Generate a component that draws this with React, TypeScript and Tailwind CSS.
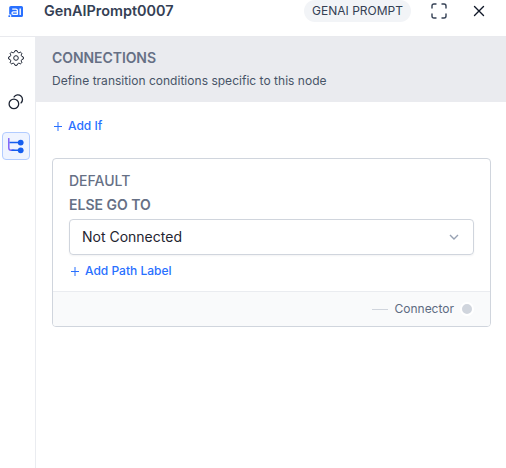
import type { ReactNode } from "react";

function gearPath(cx: number, cy: number) {
  const at = (r: number, deg: number) => {
    const a = (deg * Math.PI) / 180;
    return `${(cx + r * Math.cos(a)).toFixed(2)} ${(cy + r * Math.sin(a)).toFixed(2)}`;
  };
  let d = "";
  for (let i = 0; i < 8; i++) {
    const a = i * 45;
    d += `${i ? "L" : "M"}${at(6.1, a - 14)}L${at(7.3, a - 9)}Q${at(7.7, a)} ${at(7.3, a + 9)}L${at(6.1, a + 14)}Q${at(5.6, a + 22.5)} ${at(6.1, a + 31)}`;
  }
  return d + "Z";
}

const GearIcon = () => (
  <svg width="16" height="16" viewBox="0 0 16 16" fill="none" stroke="#1d2433" strokeWidth="1" strokeLinejoin="round">
    <path d={gearPath(8, 8)} />
    <circle cx="8" cy="8" r="2.3" />
  </svg>
);

const CirclesIcon = () => (
  <svg width="16" height="16" viewBox="0 0 16 16" fill="none" stroke="#1d2433" strokeWidth="1.3">
    <circle cx="5.9" cy="9.9" r="4.8" />
    <path d="M6.1 2.9A4.6 4.6 0 1 1 13 8.9" strokeLinecap="round" />
  </svg>
);

const TreeIcon = () => (
  <svg width="16" height="16" viewBox="0 0 16 16" fill="none">
    <path d="M0.8 0.6V10Q0.8 12.3 3.1 12.3H6" stroke="#7a5af8" strokeWidth="1.4" strokeLinecap="round" />
    <path d="M1.5 4.6H12M3.5 12.3H12" stroke="#155eef" strokeWidth="1.5" />
    <circle cx="12.7" cy="4.6" r="2.9" fill="#155eef" />
    <circle cx="12.7" cy="12.3" r="2.9" fill="#155eef" />
  </svg>
);

const Logo = () => (
  <svg width="16" height="12" viewBox="0 0 16 12" fill="none">
    <path d="M3 0H13.4Q15 0 15 1.6V9.4Q15 11 13.4 11H3.2V8.4H1.2V1.6Q1.2 0 3 0Z" fill="#2970ff" />
    <rect x="0.4" y="9.2" width="1.8" height="1.8" rx="0.5" fill="#2970ff" />
    <path d="M4.2 3.2H7.8Q9.4 3.2 9.4 4.8V8.7M9.4 5.8H5.4Q4 5.8 4 7.1Q4 8.4 5.4 8.4H9.4" stroke="#fff" strokeWidth="1.3" />
    <path d="M12.2 2.6V9" stroke="#fff" strokeWidth="1.4" />
  </svg>
);

const AddLink = ({ children }: { children: ReactNode }) => (
  <button className="flex h-4 items-center gap-[5px] text-[12px] leading-4 font-medium whitespace-nowrap text-[#2970ff]">
    <svg width="11" height="11" viewBox="0 0 11 11" stroke="currentColor" strokeWidth="1">
      <path d="M6 1V10M2 5.5H10" />
    </svg>
    {children}
  </button>
);

export default function App() {
  return (
    <div className="flex h-[468px] w-[506px] flex-col overflow-hidden bg-white font-['Inter',sans-serif] text-[#667085]">
      <header className="flex h-9 shrink-0 items-start pl-2">
        <div className="mt-1.5"><Logo /></div>
        <h1 className="ml-5 w-[260px] text-[14.4px] leading-[22px] font-semibold text-[#344054]">GenAIPrompt0007</h1>
        <span className="flex h-[22px] w-[107px] items-center justify-center rounded-full bg-[#f2f4f7] text-[12px] whitespace-nowrap text-[#344054]">
          GENAI PROMPT
        </span>
        <svg className="mt-[3px] ml-5" width="16" height="16" viewBox="0 0 16 16" fill="none" stroke="#344054" strokeWidth="1.4" strokeLinecap="round">
          <path d="M1 5V3Q1 1 3 1H5M11 1H13Q15 1 15 3V5M15 11V13Q15 15 13 15H11M5 15H3Q1 15 1 13V11" />
        </svg>
        <svg className="mt-[5px] ml-[26px]" width="12" height="12" viewBox="0 0 12 12" stroke="#101828" strokeWidth="1.4" strokeLinecap="round">
          <path d="M1.5 1.5L10.5 10.5M10.5 1.5L1.5 10.5" />
        </svg>
      </header>
      <div className="flex min-h-0 flex-1 border-t border-[#e9eaee]">
        <nav className="flex w-9 shrink-0 flex-col items-start gap-4 border-r border-[#eaecf0] pt-[7px] pl-0.5">
          <button className="flex size-7 items-center justify-center"><GearIcon /></button>
          <button className="flex size-7 items-center justify-center"><CirclesIcon /></button>
          <button className="flex size-7 items-center justify-center rounded-[4px] border border-[#b2ccff] bg-[#eff4ff]"><TreeIcon /></button>
        </nav>
        <main className="min-w-0 flex-1">
          <section className="h-[65px] bg-[#eaebef] pt-[11px] pl-4">
            <h2 className="text-[14px] leading-5 font-semibold tracking-[-0.005em]">CONNECTIONS</h2>
            <p className="mt-1 text-[12px] leading-[18px] tracking-[0.002em] text-[#475467]">Define transition conditions specific to this node</p>
          </section>
          <div className="pt-4 pl-4"><AddLink>Add If</AddLink></div>
          <section className="mt-6 ml-4 w-[439px] overflow-hidden rounded-[4px] border border-[#d0d5dd]">
            <div className="h-[132px] px-4 pt-3">
              <div className="text-[14px] leading-5 font-medium">DEFAULT</div>
              <div className="mt-1 text-[14px] leading-5 font-semibold">ELSE GO TO</div>
              <div className="mt-1 flex h-9 items-center justify-between rounded-[4px] border border-[#d0d5dd] pr-3 pb-px pl-3 text-[14px] text-[#1f2530] shadow-[0_1px_2px_rgba(16,24,40,0.05)]">
                Not Connected
                <svg width="14" height="14" viewBox="0 0 14 14" fill="none" stroke="#98a2b3" strokeWidth="1.4">
                  <path d="M3 5L7 9L11 5" />
                </svg>
              </div>
              <div className="mt-2"><AddLink>Add Path Label</AddLink></div>
            </div>
            <footer className="flex h-[35px] items-center justify-end border-t border-[#eaecf0] bg-[#f9fafb] pr-4 text-[12px] text-[#5d6b82]">
              <span className="mr-1.5 h-px w-4 bg-[#d0d5dd]" />
              Connector
              <span className="ml-1.5 size-[14px] rounded-full border-2 border-white bg-[#d0d5dd]" />
            </footer>
          </section>
        </main>
      </div>
    </div>
  );
}
